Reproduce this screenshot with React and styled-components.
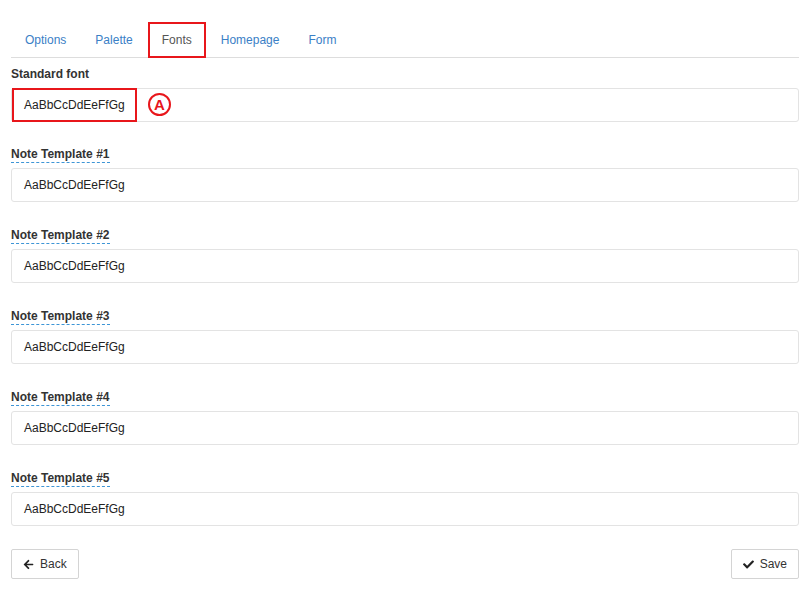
import React from 'react';
import styled, { createGlobalStyle } from 'styled-components';
import { FaArrowLeft, FaCheck } from 'react-icons/fa';

const GlobalStyle = createGlobalStyle`
  body {
    margin: 0;
    background: #fff;
    font-family: "Liberation Sans", Arial, sans-serif;
    font-size: 12px;
    color: #333;
  }
`;

const Page = styled.div`
  padding: 22px 12px 20px 11px;
`;

const TabBar = styled.ul`
  display: flex;
  list-style: none;
  margin: 0 0 8px;
  padding: 0;
  border-bottom: 1px solid #ddd;
`;

const Tab = styled.li`
  position: relative;
  padding: 9px 13px 8px;
  margin: 0 1px -1px 0;
  line-height: 17px;
  color: ${({ $active }) => ($active ? '#555' : '#3a80c6')};
  border: 1px solid ${({ $active }) => ($active ? '#ddd' : 'transparent')};
  border-bottom-color: ${({ $active }) => ($active ? '#fff' : 'transparent')};
  background: ${({ $active }) => ($active ? '#fff' : 'transparent')};
  border-radius: 3px 3px 0 0;
  cursor: pointer;
`;

const Highlight = styled.span`
  position: absolute;
  inset: -1px;
  border: 2px solid #e8161b;
  pointer-events: none;
`;

const Field = styled.div`
  margin-bottom: ${({ $first }) => ($first ? 24 : 25)}px;
`;

const Label = styled.div`
  display: inline-block;
  font-weight: bold;
  line-height: 16px;
  color: #333;
  margin-bottom: 5px;
  border-bottom: 1px dashed ${({ $hint }) => ($hint ? '#3d95d6' : 'transparent')};
`;

const InputWrap = styled.div`
  position: relative;
`;

const Input = styled.div`
  height: 34px;
  box-sizing: border-box;
  border: 1px solid #e3e3e3;
  border-radius: 3px;
  padding: 0 12px;
  display: flex;
  align-items: center;
  color: #222;
  font-size: 12px;
`;

const Marked = styled.span`
  position: absolute;
  left: 1px;
  top: 0;
  width: 125px;
  height: 34px;
  box-sizing: border-box;
  border: 2px solid #e8161b;
`;

const Badge = styled.span`
  position: absolute;
  left: 137px;
  top: 5px;
  width: 23px;
  height: 23px;
  box-sizing: border-box;
  border: 2px solid #e8161b;
  border-radius: 50%;
  color: #e8161b;
  font-weight: bold;
  font-size: 15px;
  display: flex;
  align-items: center;
  justify-content: center;
  line-height: 1;
`;

const Footer = styled.div`
  display: flex;
  justify-content: space-between;
  margin-top: -2px;
`;

const Button = styled.button`
  display: inline-flex;
  align-items: center;
  gap: 6px;
  height: 30px;
  padding: 0 11px;
  background: #fff;
  border: 1px solid #d4d4d4;
  border-radius: 2px;
  font-family: inherit;
  font-size: 12px;
  color: #333;
  cursor: pointer;

  svg {
    font-size: 11px;
    color: #222;
  }
`;

const tabs = ['Options', 'Palette', 'Fonts', 'Homepage', 'Form'];
const sample = 'AaBbCcDdEeFfGg';
const templates = [1, 2, 3, 4, 5];

const App = () => (
  <>
    <GlobalStyle />
    <Page>
      <TabBar>
        {tabs.map((t) => (
          <Tab key={t} $active={t === 'Fonts'}>
            {t}
            {t === 'Fonts' && <Highlight />}
          </Tab>
        ))}
      </TabBar>

      <Field $first>
        <Label>Standard font</Label>
        <InputWrap>
          <Input>{sample}</Input>
          <Marked />
          <Badge>A</Badge>
        </InputWrap>
      </Field>

      {templates.map((n) => (
        <Field key={n}>
          <Label $hint>Note Template #{n}</Label>
          <Input>{sample}</Input>
        </Field>
      ))}

      <Footer>
        <Button>
          <FaArrowLeft />
          Back
        </Button>
        <Button>
          <FaCheck />
          Save
        </Button>
      </Footer>
    </Page>
  </>
);

export default App;
